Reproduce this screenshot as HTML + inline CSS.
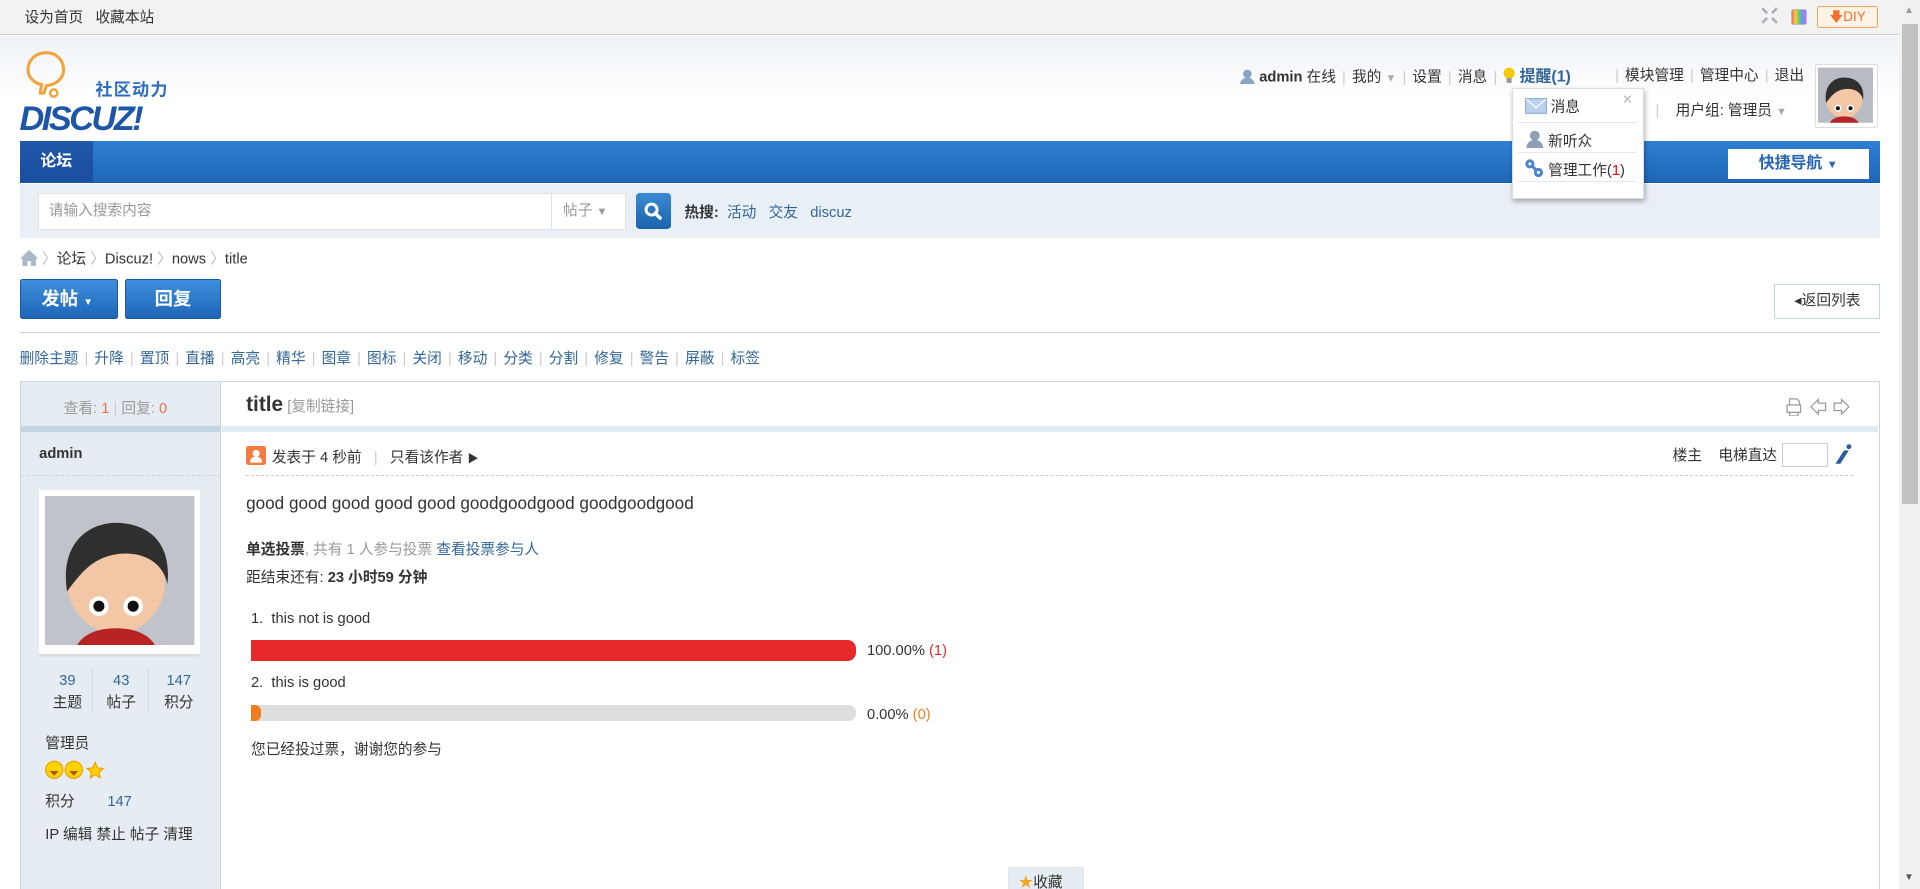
<!DOCTYPE html>
<html><head><meta charset="utf-8">
<style>
html,body{margin:0;padding:0;overflow:hidden;background:#fff}
#w{zoom:1.2245;width:1568px;height:726px;position:relative;overflow:hidden;font-family:"Liberation Sans","Noto Sans CJK SC",sans-serif;font-size:12px;color:#333}
.a{position:absolute;white-space:nowrap}
.blue{color:#336699}
.sep{color:#ccc;margin:0 5px}
.bl{color:#369}
.ic{display:inline-block;vertical-align:-2px}
</style></head><body>
<div id="w">
<!-- top bar -->
<div class="a" style="left:0;top:0;width:1551px;height:28px;background:#f2f2f2;border-bottom:1px solid #ccc"></div>
<div class="a" style="left:20px;top:5px">设为首页&nbsp;&nbsp;&nbsp;收藏本站</div>
<svg class="a" style="left:1438px;top:6px" width="14" height="14" viewBox="0 0 14 14" stroke="#aab" stroke-width="2"><path d="M1 1l4 4M13 1l-4 4M1 13l4-4M13 13l-4-4"/></svg>
<div class="a" style="left:1463px;top:7px;width:11px;height:12px;border:1px solid #bbb;border-radius:2px;background:linear-gradient(90deg,#f66,#fc3,#6c6,#69f,#c6f)"></div>
<div class="a" style="left:1484px;top:5px;width:48px;height:16px;border:1px solid #f5a35c;border-radius:2px;background:#fff4e4;color:#f07030;font-size:11px;line-height:16px;text-align:center">🡇DIY</div>
<!-- header -->
<div class="a" style="left:0;top:29px;width:1551px;height:86px;background:linear-gradient(#eef2f7,#fff 60%)"></div>
<svg class="a" style="left:14px;top:40px" width="140" height="70" viewBox="0 0 140 70">
<path d="M24 3c-9 0-15 6-15 14 0 6 5 11 11 12l-1 7h3l2-6c9-1 14-7 14-13 0-8-6-14-14-14z" fill="none" stroke="#f2a33a" stroke-width="2.5"/>
<circle cx="30" cy="36" r="3" fill="none" stroke="#f2a33a" stroke-width="2"/>
<text x="64" y="38" font-size="14" font-weight="bold" fill="#2f6cbf" font-family="Noto Sans CJK SC,sans-serif" letter-spacing="1">社区动力</text>
<text x="2" y="66" font-size="28" font-weight="bold" font-style="italic" fill="#1d56a8" font-family="Liberation Sans,sans-serif" letter-spacing="-2">DISCUZ!</text>
</svg>
<div class="a" style="left:1013px;top:55px;line-height:16px"><svg class="ic" width="12" height="13" viewBox="0 0 12 13" fill="#8aa4c8"><circle cx="6" cy="4" r="3.5"/><path d="M0 13c0-4 3-6 6-6s6 2 6 6z"/></svg> <b>admin</b> 在线<span class="sep">|</span>我的 <span style="color:#aaa;font-size:9px">▼</span><span class="sep">|</span>设置<span class="sep">|</span>消息<span class="sep">|</span><svg class="ic" width="10" height="14" viewBox="0 0 10 14"><circle cx="5" cy="5" r="4.5" fill="#f5c800"/><rect x="3" y="9" width="4" height="4" fill="#999"/></svg> <b class="blue" style="font-size:13px">提醒(1)</b></div>
<div class="a" style="left:1314px;top:55px;line-height:16px"><span class="sep">|</span>模块管理<span class="sep">|</span>管理中心<span class="sep">|</span>退出</div>
<div class="a" style="left:1352px;top:83px;line-height:16px"><span style="color:#ccc">|</span>&nbsp;&nbsp;&nbsp;&nbsp;用户组: 管理员 <span style="color:#aaa;font-size:9px">▼</span></div>
<div class="a" style="left:1482px;top:52px;width:50px;height:51px;border:1px solid #ddd;background:#fff;border-radius:2px"></div>
<svg class="a" style="left:1485px;top:55px" width="45" height="46" viewBox="0 0 122 122">
<rect width="122" height="122" fill="#b8bcc2"/><ellipse cx="58" cy="70" rx="40" ry="42" fill="#f3c7a6"/>
<path d="M18 78c-6-40 18-56 40-56s46 12 42 50c-4-20-24-28-44-24-18 4-26 14-38 30z" fill="#2f2f2f"/>
<circle cx="44" cy="90" r="8" fill="#fff"/><circle cx="72" cy="90" r="8" fill="#fff"/><circle cx="44" cy="90" r="4.5" fill="#111"/><circle cx="72" cy="90" r="4.5" fill="#111"/>
<path d="M26 122c6-10 18-14 32-14s26 4 32 14z" fill="#b82424"/></svg>
<!-- nav -->
<div class="a" style="left:16px;top:115px;width:1519px;height:34px;background:linear-gradient(#2e7fd3,#1f66b8);border-bottom:1px solid #1b5aa0"></div>
<div class="a" style="left:16px;top:115px;width:60px;height:34px;background:linear-gradient(#2058aa,#1a4e9e);color:#fff;font-weight:bold;font-size:13px;line-height:34px;text-align:center">论坛</div>
<div class="a" style="left:1411px;top:122px;width:115px;height:24px;background:#fff;color:#2765b5;font-weight:bold;font-size:13px;line-height:24px;text-align:center">快捷导航 <span style="font-size:9px">▼</span></div>
<!-- search -->
<div class="a" style="left:16px;top:150px;width:1519px;height:44px;background:#e8eff5"></div>
<div class="a" style="left:31px;top:158px;width:418px;height:28px;background:#fff;border:1px solid #dfe3e6;color:#999;line-height:28px;text-indent:8px">请输入搜索内容</div>
<div class="a" style="left:450px;top:158px;width:60px;height:28px;background:#fff;border:1px solid #dfe3e6;color:#999;line-height:28px;text-indent:9px">帖子 <span style="color:#999;font-size:9px">▼</span></div>
<div class="a" style="left:519px;top:158px;width:29px;height:29px;background:linear-gradient(#3a8ad2,#1a64ac);border-radius:3px"></div>
<svg class="a" style="left:525px;top:164px" width="17" height="17" viewBox="0 0 17 17"><circle cx="7" cy="7" r="4.5" fill="none" stroke="#fff" stroke-width="2.4"/><path d="M10 10l4 4" stroke="#fff" stroke-width="2.8" stroke-linecap="round"/></svg>
<div class="a" style="left:559px;top:164px"><b style="color:#333">热搜:</b>&nbsp;&nbsp;<span class="bl">活动</span>&nbsp;&nbsp;&nbsp;<span class="bl">交友</span>&nbsp;&nbsp;&nbsp;<span class="bl">discuz</span></div>
<!-- popup -->
<div class="a" style="left:1235px;top:72px;width:106px;height:89px;background:#fff;border:1px solid #ddd;box-shadow:1px 2px 4px rgba(0,0,0,.3)"></div>
<div class="a" style="left:1325px;top:73px;color:#bbb;font-size:14px">×</div>
<div class="a" style="left:1245px;top:80px;line-height:16px"><svg class="ic" width="18" height="13" viewBox="0 0 18 13"><rect x=".5" y=".5" width="17" height="12" fill="#bcd2ec" stroke="#8fb0d8"/><path d="M1 1l8 7 8-7" fill="none" stroke="#fff"/></svg> 消息</div>
<div class="a" style="left:1240px;top:100px;width:96px;border-top:1px solid #e3e8ee"></div>
<div class="a" style="left:1245px;top:106px;line-height:16px"><svg class="ic" width="16" height="15" viewBox="0 0 12 13" fill="#8ca0b8"><circle cx="6" cy="4" r="3.5"/><path d="M0 13c0-4 3-6 6-6s6 2 6 6z"/></svg> 新听众</div>
<div class="a" style="left:1240px;top:124px;width:96px;border-top:1px solid #e3e8ee"></div>
<div class="a" style="left:1245px;top:130px;line-height:16px"><svg class="ic" width="16" height="15" viewBox="0 0 16 15" fill="none" stroke="#4a86c8" stroke-width="2.5"><circle cx="4" cy="4" r="2.5"/><circle cx="11" cy="11" r="2.5"/><path d="M6 6l3 3"/></svg> 管理工作(<span style="color:red">1</span>)</div>
<div class="a" style="left:1240px;top:148px;width:96px;border-top:1px solid #e3e8ee"></div>
<!-- breadcrumb -->
<div class="a" style="left:16px;top:204px;line-height:16px"><svg class="ic" width="15" height="13" viewBox="0 0 15 13" fill="#a8b8c8"><path d="M7.5 0L0 7h2v6h4V9h3v4h4V7h2z"/></svg> <span style="color:#bbb">〉</span>论坛 <span style="color:#bbb">〉</span>Discuz! <span style="color:#bbb">〉</span>nows <span style="color:#bbb">〉</span>title</div>
<!-- buttons -->
<div class="a" style="left:16px;top:228px;width:79px;height:31px;background:linear-gradient(#3d8fdc,#1f66b8);border:1px solid #1a5aa0;border-radius:2px;color:#fff;font-size:15px;font-weight:bold;line-height:31px;text-indent:17px">发帖 <span style="font-size:8px">▼</span></div>
<div class="a" style="left:102px;top:228px;width:77px;height:31px;background:linear-gradient(#3d8fdc,#1f66b8);border:1px solid #1a5aa0;border-radius:2px;color:#fff;font-size:15px;font-weight:bold;line-height:31px;text-align:center">回复</div>
<div class="a" style="left:1449px;top:232px;width:85px;height:27px;border:1px solid #c2d5e3;background:#fff;line-height:27px;text-align:center">◂返回列表</div>
<div class="a" style="left:16px;top:271px;width:1519px;border-top:1px solid #ccc"></div>
<div class="a bl" style="left:16px;top:283px">删除主题<span class="sep">|</span>升降<span class="sep">|</span>置顶<span class="sep">|</span>直播<span class="sep">|</span>高亮<span class="sep">|</span>精华<span class="sep">|</span>图章<span class="sep">|</span>图标<span class="sep">|</span>关闭<span class="sep">|</span>移动<span class="sep">|</span>分类<span class="sep">|</span>分割<span class="sep">|</span>修复<span class="sep">|</span>警告<span class="sep">|</span>屏蔽<span class="sep">|</span>标签</div>
<!-- post -->
<div class="a" style="left:16px;top:311px;width:1518px;height:430px;border:1px solid #cdd5dd"></div>
<div class="a" style="left:17px;top:312px;width:163px;height:420px;background:#e5edf2;border-right:1px solid #c2d5e3"></div>
<div class="a" style="left:17px;top:348px;width:163px;height:5px;background:#c2d5e3"></div>
<div class="a" style="left:181px;top:348px;width:1353px;height:5px;background:#e3ebf2"></div>
<div class="a" style="left:52px;top:324px;color:#999">查看: <span style="color:#f26c4f">1</span>&nbsp;<span style="color:#ccc">|</span>&nbsp;回复: <span style="color:#f26c4f">0</span></div>
<div class="a" style="left:201px;top:321px"><b style="font-size:17px;color:#333">title</b> <span style="color:#999">[复制链接]</span></div>
<svg class="a" style="left:1457px;top:324px" width="56" height="16" viewBox="0 0 56 16" fill="none" stroke="#999"><rect x="2.5" y="6.5" width="11" height="6"/><path d="M4.5 6.5V1.5h6l2 2v3M4.5 12.5v3h7v-3"/><path d="M22 8l6-6v3h6v6h-6v3z"/><path d="M53 8l-6-6v3h-6v6h6v3z"/></svg>
<div class="a" style="left:32px;top:364px;font-weight:bold;color:#333">admin</div>
<div class="a" style="left:17px;top:388px;width:163px;border-top:1px dashed #c9d4dc"></div>
<div class="a" style="left:32px;top:400px;width:131px;height:134px;background:#fff;box-shadow:0 2px 1px #d8dde2"></div>
<svg class="a" style="left:37px;top:405px" width="122" height="122" viewBox="0 0 122 122">
<rect width="122" height="122" fill="#c0c4ca"/><ellipse cx="58" cy="70" rx="40" ry="42" fill="#f3c7a6"/>
<path d="M18 78c-6-40 18-56 40-56s46 12 42 50c-4-20-24-28-44-24-18 4-26 14-38 30z" fill="#2f2f2f"/>
<circle cx="44" cy="90" r="8" fill="#fff"/><circle cx="72" cy="90" r="8" fill="#fff"/><circle cx="44" cy="90" r="4.5" fill="#111"/><circle cx="72" cy="90" r="4.5" fill="#111"/>
<path d="M26 122c6-10 18-14 32-14s26 4 32 14z" fill="#b82424"/></svg>
<div class="a" style="left:32px;top:547px;width:46px;text-align:center;line-height:18px"><span class="bl">39</span><br>主题</div>
<div class="a" style="left:75px;top:546px;height:36px;border-left:1px solid #cdd"></div>
<div class="a" style="left:76px;top:547px;width:46px;text-align:center;line-height:18px"><span class="bl">43</span><br>帖子</div>
<div class="a" style="left:121px;top:546px;height:36px;border-left:1px solid #cdd"></div>
<div class="a" style="left:122px;top:547px;width:48px;text-align:center;line-height:18px"><span class="bl">147</span><br>积分</div>
<div class="a" style="left:37px;top:598px">管理员</div>
<svg class="a" style="left:37px;top:621px" width="50" height="16" viewBox="0 0 50 16"><circle cx="7.5" cy="8" r="7" fill="#ffd200" stroke="#f0a000"/><circle cx="23.5" cy="8" r="7" fill="#ffd200" stroke="#f0a000"/><path d="M4 9h7l-3.5 4zM20 9h7l-3.5 4z" fill="#a52"/><path d="M41 2l2 4.5 4.5.5-3.5 3 1 4.5-4-2.5-4 2.5 1-4.5-3.5-3 4.5-.5z" fill="#ffd200" stroke="#f0a000"/></svg>
<div class="a" style="left:37px;top:645px">积分&nbsp;&nbsp;&nbsp;&nbsp;&nbsp;&nbsp;&nbsp;&nbsp;<span class="bl">147</span></div>
<div class="a" style="left:37px;top:672px">IP 编辑 禁止 帖子 清理</div>
<div class="a" style="left:201px;top:364px;width:16px;height:16px;background:#f37b3e;border-radius:2px"></div>
<svg class="a" style="left:204px;top:366px" width="10" height="13" viewBox="0 0 12 13" fill="#fff"><circle cx="6" cy="4" r="3.5"/><path d="M0 13c0-4 3-6 6-6s6 2 6 6z"/></svg>
<div class="a" style="left:222px;top:364px">发表于 4 秒前<span class="sep" style="margin:0 10px">|</span>只看该作者 <span style="font-size:9px">▶</span></div>
<div class="a" style="left:1366px;top:363px">楼主&nbsp;&nbsp;&nbsp;&nbsp;电梯直达</div>
<div class="a" style="left:1455px;top:362px;width:36px;height:18px;border:1px solid #ccc;background:#fff"></div>
<svg class="a" style="left:1497px;top:362px" width="16" height="18" viewBox="0 0 16 18"><path d="M2 17L9 6h4L6 17z" fill="#2a5d9e"/><circle cx="13" cy="3" r="2" fill="#2a5d9e"/></svg>
<div class="a" style="left:201px;top:388px;width:1312px;border-top:1px dashed #ccc"></div>
<div class="a" style="left:201px;top:403px;font-size:14px">good good good good good goodgoodgood goodgoodgood</div>
<div class="a" style="left:201px;top:439px"><b>单选投票</b><span style="color:#999">, 共有 1 人参与投票</span> <span class="bl">查看投票参与人</span></div>
<div class="a" style="left:201px;top:462px">距结束还有: <b>23 小时59 分钟</b></div>
<div class="a" style="left:205px;top:499px">1.&nbsp;&nbsp;this not is good</div>
<div class="a" style="left:205px;top:523px;width:494px;height:17px;background:#e72929;border-radius:0 7px 7px 0"></div>
<div class="a" style="left:708px;top:525px">100.00% <span style="color:#e72929">(1)</span></div>
<div class="a" style="left:205px;top:551px">2.&nbsp;&nbsp;this is good</div>
<div class="a" style="left:205px;top:576px;width:494px;height:13px;background:#dedede;border-radius:0 6px 6px 0"></div>
<div class="a" style="left:205px;top:576px;width:8px;height:13px;background:#f07e1e;border-radius:0 5px 5px 0"></div>
<div class="a" style="left:708px;top:577px">0.00% <span style="color:#f07e1e">(0)</span></div>
<div class="a" style="left:205px;top:603px">您已经投过票，谢谢您的参与</div>
<div class="a" style="left:823px;top:708px;width:61px;height:24px;background:#e5edf2;border:1px solid #dde4ea;border-radius:2px;line-height:26px;text-indent:8px"><span style="color:#f5a623">★</span>收藏</div>
<!-- scrollbar -->
<div class="a" style="left:1551px;top:0;width:17px;height:726px;background:#f1f1f1"></div>
<div class="a" style="left:1553px;top:20px;width:13px;height:392px;background:#c1c1c1"></div>
<div class="a" style="left:1555px;top:4px;font-size:8px;color:#999">▲</div>
<div class="a" style="left:1555px;top:712px;font-size:8px;color:#555">▼</div>
</div>
</body></html>
